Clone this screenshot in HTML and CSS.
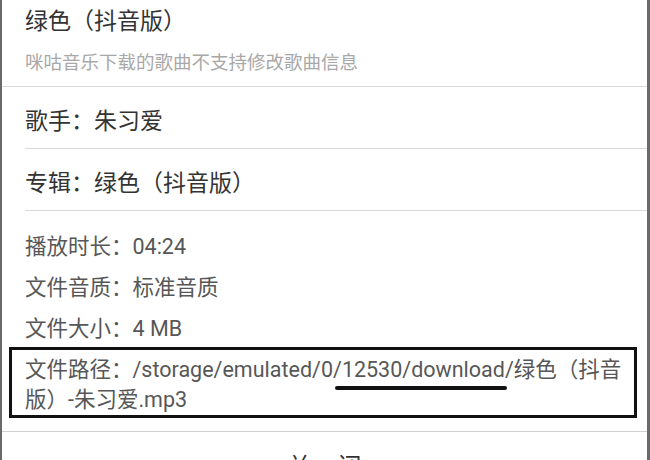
FILE: index.html
```html
<!DOCTYPE html>
<html lang="zh-CN">
<head>
<meta charset="utf-8">
<link rel="stylesheet" href="styles.css">
</head>
<body>
<div class="dialog">
  <div class="head">
    <div class="title">绿色（抖音版）</div>
    <div class="note">咪咕音乐下载的歌曲不支持修改歌曲信息</div>
  </div>
  <div class="field">歌手：朱习爱</div>
  <div class="field">专辑：绿色（抖音版）</div>
  <div class="info">
    <div class="info-row">播放时长：04:24</div>
    <div class="info-row">文件音质：标准音质</div>
    <div class="info-row">文件大小：4 MB</div>
    <div class="path-box">文件路径：/storage/emulated/0/<span class="mark">12530/download</span>/绿色（抖音版）-朱习爱.mp3</div>
  </div>
  <div class="actions">
    <div class="close-btn">关 闭</div>
  </div>
</div>
</body>
</html>
```
FILE: styles.css
```css
html, body {
  margin: 0;
  padding: 0;
  background: #ffffff;
}
body {
  font-family: Roboto, "Noto Sans CJK SC", sans-serif;
  text-spacing-trim: space-all;
}
.dialog {
  width: 650px;
  height: 460px;
  box-sizing: border-box;
  border-left: 2px solid #6a6a6a;
  border-right: 3px solid #6a6a6a;
  overflow: hidden;
  background: #fff;
}
.head {
  padding: 7px 0 10px 23px;
  border-bottom: 1px solid #d9d9d9;
  height: 69px;
}
.title {
  font-size: 23px;
  line-height: 30px;
  color: #333;
}
.note {
  margin-top: 13px;
  font-size: 18.5px;
  line-height: 26px;
  color: #a8a8a8;
}
.field {
  margin-left: 23px;
  height: 58px;
  padding-top: 3px;
  display: flex;
  align-items: center;
  font-size: 23px;
  color: #333;
  border-bottom: 1px solid #d9d9d9;
}
.info {
  padding-top: 15px;
}
.info-row {
  padding-left: 23px;
  height: 41px;
  line-height: 41px;
  font-size: 21.5px;
  color: #575757;
}
.path-box {
  margin: -2px 10px 0 7px;
  border: 3px solid #111;
  padding: 5px 4px 0 13px;
  height: 60px;
  font-size: 21.5px;
  line-height: 30px;
  color: #575757;
}
.mark {
  position: relative;
}
.mark::after {
  content: "";
  position: absolute;
  left: -7px;
  right: -2px;
  bottom: -8px;
  height: 4px;
  border-radius: 2px;
  background: #111;
}
.actions {
  margin-top: 13px;
  border-top: 1px solid #d0d0d0;
  display: flex;
  justify-content: center;
}
.close-btn {
  padding-top: 19px;
  font-size: 24px;
  line-height: 32px;
  color: #333;
  letter-spacing: 10px;
  margin-right: -10px;
}
```
